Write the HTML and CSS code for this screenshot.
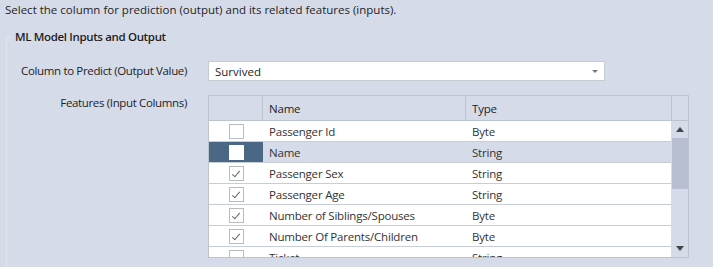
FILE: index.html
```html
<!DOCTYPE html>
<html lang="en">
<head>
  <meta charset="UTF-8">
  <title>ML Model Inputs and Output</title>
  <link rel="stylesheet" href="styles.css">
</head>
<body>
  <div class="intro">Select the column for prediction (output) and its related features (inputs).</div>

  <fieldset class="group">
    <legend>ML Model Inputs and Output</legend>

    <div class="form-row">
      <label class="form-label">Column to Predict (Output Value)</label>
      <div class="dropdown">
        <span>Survived</span>
        <span class="dropdown-arrow"></span>
      </div>
    </div>

    <div class="form-row features">
      <label class="form-label">Features (Input Columns)</label>
      <div class="grid">
        <div class="grid-head">
          <div class="cell chk"></div>
          <div class="cell name">Name</div>
          <div class="cell type">Type</div>
          <div class="cell corner"></div>
        </div>
        <div class="grid-main">
          <div class="grid-rows">
            <div class="row">
              <div class="cell chk"><span class="box"></span></div>
              <div class="cell name">Passenger Id</div>
              <div class="cell type">Byte</div>
            </div>
            <div class="row selected">
              <div class="cell chk"><span class="box"></span></div>
              <div class="cell name">Name</div>
              <div class="cell type">String</div>
            </div>
            <div class="row">
              <div class="cell chk"><span class="box checked"></span></div>
              <div class="cell name">Passenger Sex</div>
              <div class="cell type">String</div>
            </div>
            <div class="row">
              <div class="cell chk"><span class="box checked"></span></div>
              <div class="cell name">Passenger Age</div>
              <div class="cell type">String</div>
            </div>
            <div class="row">
              <div class="cell chk"><span class="box checked"></span></div>
              <div class="cell name">Number of Siblings/Spouses</div>
              <div class="cell type">Byte</div>
            </div>
            <div class="row">
              <div class="cell chk"><span class="box checked"></span></div>
              <div class="cell name">Number Of Parents/Children</div>
              <div class="cell type">Byte</div>
            </div>
            <div class="row">
              <div class="cell chk"><span class="box"></span></div>
              <div class="cell name">Ticket</div>
              <div class="cell type">String</div>
            </div>
          </div>
          <div class="scrollbar">
            <div class="scroll-btn"><span class="arrow up"></span></div>
            <div class="scroll-thumb"></div>
            <div class="scroll-track"></div>
            <div class="scroll-btn"><span class="arrow down"></span></div>
          </div>
        </div>
      </div>
    </div>
  </fieldset>
</body>
</html>
```

FILE: styles.css
```css
body {
  margin: 0;
  background-color: #d6dbe9;
  font-family: "Open Sans", "Noto Sans", sans-serif;
  font-size: 11.5px;
  color: #1e1e1e;
  overflow: hidden;
}

.intro {
  padding: 2px 5px 0;
  height: 16px;
  line-height: 16px;
}

.group {
  margin: 11px 0 0 6px;
  padding: 0 0 9px 0;
  border: none;
  border-top: 1px solid #e2e4ea;
  border-left: 1px solid #e2e4ea;
}

/* legend runs to the right edge so the top rule only shows left of the title */
.group legend {
  width: calc(100% - 6px);
  box-sizing: border-box;
  margin-left: 5px;
  padding: 0 3px;
  font-weight: 600;
  letter-spacing: -0.35px;
  line-height: 16px;
}

.form-row {
  display: flex;
  gap: 21px;
  margin-top: 16px;
}

.form-row.features {
  margin-top: 14px;
}

.form-label {
  width: 180px;
  text-align: right;
  white-space: nowrap;
  letter-spacing: -0.35px;
  line-height: 20px;
}

.features .form-label {
  line-height: 16px;
}

.dropdown {
  width: 383px;
  height: 18px;
  padding: 0 6px;
  background-color: #fff;
  border: 1px solid #c4ccd3;
  display: flex;
  align-items: center;
  justify-content: space-between;
}

.dropdown-arrow {
  width: 0;
  height: 0;
  border-left: 3px solid transparent;
  border-right: 3px solid transparent;
  border-top: 3px solid #777;
}

.grid {
  width: 479px;
  border: 1px solid #bcc5cc;
  background-color: #d6dbe9;
}

.grid-head {
  display: flex;
  height: 24px;
  border-bottom: 1px solid #bcc5cc;
}

.cell {
  display: flex;
  align-items: center;
  box-sizing: border-box;
  padding-left: 6px;
  color: #333;
  letter-spacing: -0.2px;
}

.chk {
  width: 54px;
  padding: 0;
  justify-content: center;
  border-right: 1px solid #bcc5cc;
}

.name {
  width: 203px;
  border-right: 1px solid #bcc5cc;
}

.type {
  width: 205px;
}

.grid-head .type {
  width: 206px;
  border-right: 1px solid #bcc5cc;
}

.grid-head .cell {
  color: #1e1e1e;
}

.corner {
  flex: 1;
}

.grid-main {
  display: flex;
  height: 136px;
  overflow: hidden;
}

.grid-rows {
  width: 462px;
}

.row {
  display: flex;
  height: 21px;
  background-color: #fff;
  border-bottom: 1px solid #c6cdd8;
  box-sizing: border-box;
}

.row .chk,
.row .name {
  border-right: none;
}

.row .chk {
  padding-left: 1px;
}

.row.selected {
  background-color: #d6dbe9;
}

.row.selected .chk {
  background-color: #4a6785;
}

.box {
  display: block;
  width: 13px;
  height: 13px;
  border: 1px solid #b4bcc6;
  background-color: #fff;
  position: relative;
}

.row.selected .box {
  border-color: #fff;
}

.box.checked::after {
  content: "";
  position: absolute;
  left: 4px;
  top: 2px;
  width: 3px;
  height: 7px;
  border-right: 1px solid #666;
  border-bottom: 1px solid #666;
  transform: rotate(40deg);
}

.scrollbar {
  width: 16px;
  border-left: 1px solid #d6dbe9;
  background-color: #d6dbe9;
  display: flex;
  flex-direction: column;
}

.scroll-btn {
  height: 17px;
  display: flex;
  align-items: center;
  justify-content: center;
}

.scroll-thumb {
  height: 51px;
  background-color: #b8bfd0;
}

.scroll-track {
  flex: 1;
}

.arrow {
  width: 0;
  height: 0;
  border-left: 4px solid transparent;
  border-right: 4px solid transparent;
}

.arrow.up {
  border-bottom: 5px solid #444;
}

.arrow.down {
  border-top: 5px solid #444;
}
```
